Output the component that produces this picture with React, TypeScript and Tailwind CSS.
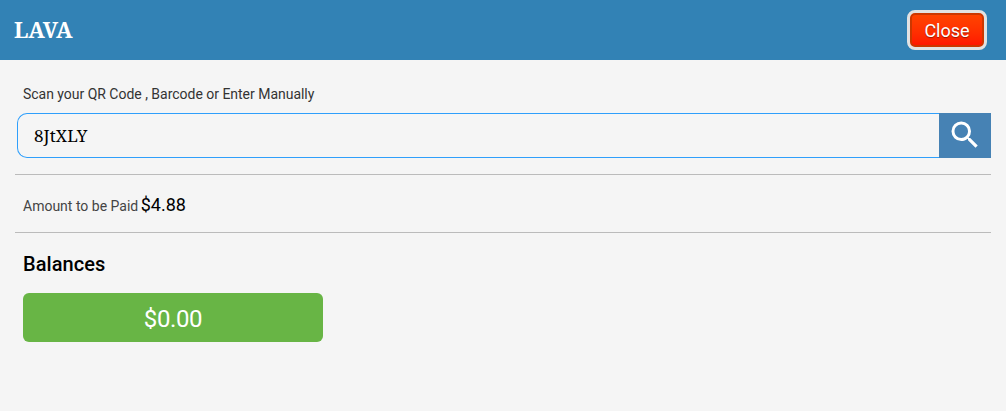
import React, { useState } from 'react';

const App: React.FC = () => {
  const [code, setCode] = useState('8JtXLY');

  return (
    <div className="min-h-screen bg-[#f5f5f5] font-['Roboto',sans-serif] text-black">
      {/* Header */}
      <header className="flex h-[60px] items-center justify-between bg-[#3282b5] pl-3.5 pr-[19px]">
        <h1 className="pb-0.5 font-['Noto_Serif','DejaVu_Serif',serif] text-[22px] font-bold tracking-[-0.25px] text-white">LAVA</h1>
        <button className="h-10 w-20 rounded-lg border-3 border-[#e2e2e2] bg-linear-to-b from-[#ff4500] to-[#ff1000] pt-0.5 text-lg text-white shadow-[inset_0_0_0_2px_#cc3700] text-shadow-[0_1px_1px_rgb(0_0_0_/_0.4)]">
          Close
        </button>
      </header>

      <main className="px-[15px] pt-[26px]">
        {/* Code entry */}
        <label htmlFor="code" className="block pl-2 text-sm leading-4 tracking-[-0.02px] text-[#333]">
          Scan your QR Code , Barcode or Enter Manually
        </label>
        <div className="mt-[11px] flex h-[45px] pl-0.5">
          <input
            id="code"
            type="text"
            value={code}
            onChange={(e) => setCode(e.target.value)}
            className="min-w-0 flex-1 rounded-l-[10px] border border-r-0 border-[#2f9ffb] px-4 font-['Noto_Serif',serif] text-[17px] tracking-[0.1px] outline-none"
          />
          <button className="flex w-[52px] items-center justify-center bg-[#4682b4] pb-px text-white" aria-label="Search">
            <svg viewBox="0 0 24 24" className="size-9" fill="currentColor">
              <path d="M15.5 14h-.79l-.28-.27A6.471 6.471 0 0 0 16 9.5 6.5 6.5 0 1 0 9.5 16c1.61 0 3.09-.59 4.23-1.57l.27.28v.79l5 4.99L20.49 19l-4.99-5zm-6 0C7.01 14 5 11.99 5 9.5S7.01 5 9.5 5 14 7.01 14 9.5 11.99 14 9.5 14z" />
            </svg>
          </button>
        </div>

        {/* Amount */}
        <div className="mt-4 flex h-[59px] items-center border-y border-[#bbb] pl-2 pt-0.5 text-sm text-[#444]">
          <p>
            Amount to be Paid <span className="-ml-px text-lg text-black">$4.88</span>
          </p>
        </div>

        {/* Balances */}
        <section className="pl-2 pt-[17px]">
          <h2 className="text-xl font-medium leading-7 tracking-[0.05px]">Balances</h2>
          <button className="mt-[15px] h-[49px] w-[300px] rounded-md bg-[#68b545] pt-0.5 text-2xl tracking-[-0.4px] text-white">$0.00</button>
        </section>
      </main>
    </div>
  );
};

export default App;
